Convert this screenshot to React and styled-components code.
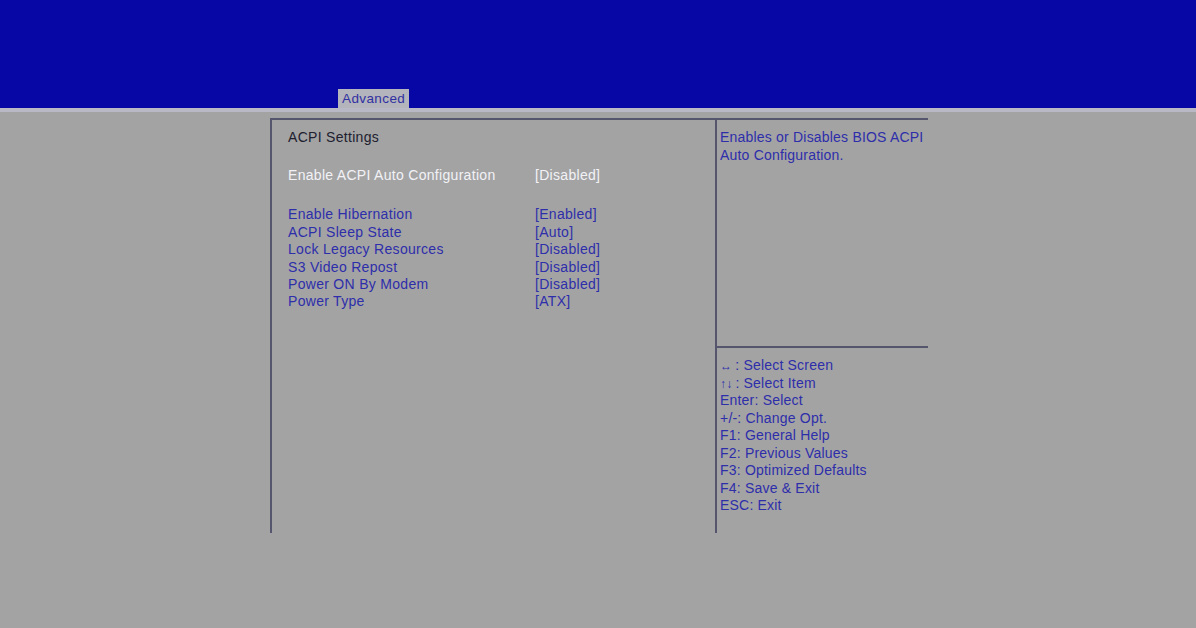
import React from "react";
import styled, { createGlobalStyle } from "styled-components";

const Global = createGlobalStyle`
  html, body {
    margin: 0;
    padding: 0;
    background: #a3a3a4;
    font-family: "Liberation Sans", Arial, sans-serif;
  }
`;

const Screen = styled.div`
  width: 1196px;
  height: 628px;
  background: #a3a3a4;
  display: flex;
  flex-direction: column;
  overflow: hidden;
`;

const Header = styled.div`
  height: 108px;
  background: #0707a6;
  display: flex;
  align-items: flex-end;
  padding-left: 338px;
  box-sizing: border-box;
`;

const Tab = styled.div`
  height: 19px;
  padding: 0 4px;
  background: #b4b4bc;
  color: #3030a0;
  font-size: 13.5px;
  line-height: 20px;
  letter-spacing: 0.4px;
`;

const Stripe = styled.div`
  height: 4px;
  background: #b9b9c6;
`;

const Frame = styled.div`
  margin: 6px 0 0 270px;
  width: 658px;
  height: 415px;
  border-top: 2px solid #55556e;
  border-left: 2px solid #55556e;
  display: flex;
  box-sizing: border-box;
`;

const Main = styled.div`
  width: 445px;
  border-right: 2px solid #55556e;
  padding: 9px 0 0 16px;
  box-sizing: border-box;
  display: flex;
  flex-direction: column;
`;

const Title = styled.div`
  color: #20202e;
  font-size: 14px;
  line-height: 17.5px;
  letter-spacing: 0.3px;
  margin-bottom: 20px;
`;

const Row = styled.div`
  display: flex;
  font-size: 14px;
  line-height: 17.4px;
  letter-spacing: 0.3px;
  color: ${(p) => (p.$active ? "#f2f2f6" : "#2e2eaa")};
  margin-bottom: ${(p) => (p.$gap ? "22.5px" : "0")};
`;

const Label = styled.span`
  width: 247px;
`;

const Value = styled.span``;

const Side = styled.div`
  flex: 1;
  display: flex;
  flex-direction: column;
`;

const Help = styled.div`
  height: 228px;
  border-bottom: 2px solid #55556e;
  padding: 9px 0 0 3px;
  box-sizing: border-box;
  color: #2e2eaa;
  font-size: 14px;
  line-height: 17.5px;
  letter-spacing: 0.2px;
  white-space: nowrap;
`;

const Keys = styled.div`
  padding: 9px 0 0 3px;
  color: #2e2eaa;
  font-size: 14px;
  letter-spacing: 0.2px;
`;

const KeyLine = styled.div`
  height: 17.5px;
  line-height: 17.5px;
`;

const Arrow = styled.span`
  font-size: 12px;
  font-weight: bold;
  margin-right: 3px;
`;

const items = [
  ["Enable Hibernation", "[Enabled]"],
  ["ACPI Sleep State", "[Auto]"],
  ["Lock Legacy Resources", "[Disabled]"],
  ["S3 Video Repost", "[Disabled]"],
  ["Power ON By Modem", "[Disabled]"],
  ["Power Type", "[ATX]"],
];

const keys = [
  "Enter: Select",
  "+/-: Change Opt.",
  "F1: General Help",
  "F2: Previous Values",
  "F3: Optimized Defaults",
  "F4: Save & Exit",
  "ESC: Exit",
];

export default function App() {
  return (
    <Screen>
      <Global />
      <Header>
        <Tab>Advanced</Tab>
      </Header>
      <Stripe />
      <Frame>
        <Main>
          <Title>ACPI Settings</Title>
          <Row $active $gap>
            <Label>Enable ACPI Auto Configuration</Label>
            <Value>[Disabled]</Value>
          </Row>
          {items.map(([l, v]) => (
            <Row key={l}>
              <Label>{l}</Label>
              <Value>{v}</Value>
            </Row>
          ))}
        </Main>
        <Side>
          <Help>
            Enables or Disables BIOS ACPI
            <br />
            Auto Configuration.
          </Help>
          <Keys>
            <KeyLine>
              <Arrow>↔</Arrow>: Select Screen
            </KeyLine>
            <KeyLine>
              <Arrow>↑↓</Arrow>: Select Item
            </KeyLine>
            {keys.map((k) => (
              <KeyLine key={k}>{k}</KeyLine>
            ))}
          </Keys>
        </Side>
      </Frame>
    </Screen>
  );
}
